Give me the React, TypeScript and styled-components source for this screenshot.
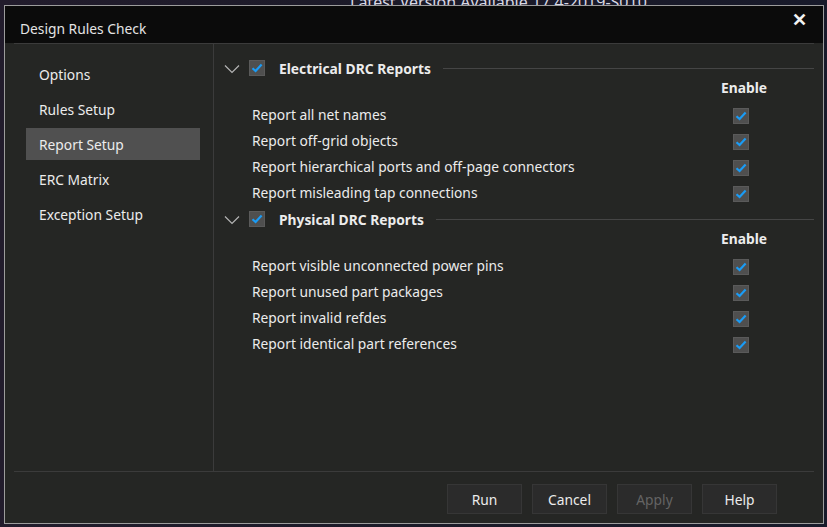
import React from "react";
import styled, { createGlobalStyle } from "styled-components";

const Global = createGlobalStyle`
  html, body { margin: 0; padding: 0; }
  body {
    width: 827px; height: 527px; overflow: hidden;
    background: #1c1a29;
    font-family: "Noto Sans", "Open Sans", sans-serif;
  }
`;

const Desktop = styled.div`
  position: relative;
  width: 827px;
  height: 527px;
  background: linear-gradient(90deg, #221c2c 0%, #1b1a28 50%, #181a2a 100%);
  overflow: hidden;
`;

const BackdropText = styled.div`
  padding: 0 0 0 350px;
  margin-top: -9px;
  font-size: 16px;
  color: #d8d8e4;
  white-space: nowrap;
`;

const Dialog = styled.div`
  position: absolute;
  left: 4px;
  top: 5px;
  width: 818px;
  height: 517px;
  border: 1px solid #9c9c9c;
  background: #252624;
  display: flex;
  flex-direction: column;
  color: #ececec;
`;

const TitleBar = styled.div`
  height: 37px;
  flex: none;
  background: #0b0b0b;
  display: flex;
  align-items: center;
  justify-content: space-between;
  padding: 0 16px 0 15px;
  box-sizing: border-box;
`;

const Title = styled.span`
  font-size: 13.8px;
  color: #e4e4e4;
  margin-top: 7px;
`;

const Close = styled.span`
  font-size: 18px;
  font-weight: 700;
  color: #f2f2f2;
  margin-top: -12px;
  line-height: 1;
`;

const Body = styled.div`
  flex: 1;
  display: flex;
  flex-direction: column;
  padding: 0 9px;
  min-height: 0;
`;

const Content = styled.div`
  flex: 1;
  display: flex;
  border-top: 1px solid #3b3b3b;
  border-bottom: 1px solid #3b3b3b;
  min-height: 0;
`;

const Sidebar = styled.div`
  width: 200px;
  flex: none;
  border-right: 1px solid #3b3b3b;
  padding: 14px 13px 0 12px;
  box-sizing: border-box;
  display: flex;
  flex-direction: column;
  gap: 3px;
`;

const NavItem = styled.div<{ $active?: boolean }>`
  height: 32px;
  display: flex;
  align-items: center;
  padding-left: 13px;
  font-size: 13.8px;
  color: #ececec;
  background: ${(p) => (p.$active ? "#505050" : "transparent")};
`;

const Main = styled.div`
  flex: 1;
  padding: 11px 0 0 10px;
  display: flex;
  flex-direction: column;
`;

const Section = styled.div`
  display: flex;
  flex-direction: column;
  & + & { margin-top: 1px; }
`;

const Header = styled.div`
  height: 26px;
  display: flex;
  align-items: center;
`;

const Chevron = styled.svg`
  width: 16px;
  height: 10px;
  margin-right: 9px;
  margin-top: 2px;
`;

const HeaderTitle = styled.span`
  font-size: 13.8px;
  font-weight: 700;
  margin-left: 14px;
  margin-right: 12px;
`;

const Rule = styled.div`
  flex: 1;
  height: 1px;
  background: #454545;
`;

const EnableRow = styled.div`
  height: 14px;
  margin-top: -1px;
  display: flex;
  justify-content: flex-end;
  align-items: center;
  padding-right: 47px;
`;

const EnableLabel = styled.span`
  font-size: 13.8px;
  font-weight: 700;
`;

const Rows = styled.div`
  margin-top: 7px;
  display: flex;
  flex-direction: column;
`;

const Row = styled.div`
  height: 26px;
  display: flex;
  align-items: center;
  padding-left: 28px;
`;

const RowLabel = styled.span`
  flex: 1;
  font-size: 13.8px;
`;

const CheckCell = styled.div`
  width: 81px;
  flex: none;
`;

const Box = styled.span`
  width: 16px;
  height: 16px;
  background: #4f4f4f;
  border: 1px solid #5a5a5a;
  box-sizing: border-box;
  display: inline-flex;
  align-items: center;
  justify-content: center;
  vertical-align: middle;
`;

const Footer = styled.div`
  height: 51px;
  flex: none;
  display: flex;
  justify-content: flex-end;
  align-items: flex-start;
  gap: 10px;
  padding: 12px 37px 0 0;
  box-sizing: border-box;
`;

const Button = styled.button<{ $disabled?: boolean }>`
  width: 75px;
  height: 30px;
  background: #2b2b2b;
  border: 1px solid #363636;
  color: ${(p) => (p.$disabled ? "#646464" : "#ececec")};
  font-family: inherit;
  font-size: 13.8px;
  padding: 0;
`;

const Check = () => (
  <Box>
    <svg width="12" height="10" viewBox="0 0 12 10">
      <path d="M1.5 5.2 L4.6 8 L10.6 1.6" fill="none" stroke="#1a9cf6" strokeWidth="2.2" />
    </svg>
  </Box>
);

const sections = [
  {
    title: "Electrical DRC Reports",
    rows: [
      "Report all net names",
      "Report off-grid objects",
      "Report hierarchical ports and off-page connectors",
      "Report misleading tap connections",
    ],
  },
  {
    title: "Physical DRC Reports",
    rows: [
      "Report visible unconnected power pins",
      "Report unused part packages",
      "Report invalid refdes",
      "Report identical part references",
    ],
  },
];

const nav = ["Options", "Rules Setup", "Report Setup", "ERC Matrix", "Exception Setup"];

export default function App() {
  return (
    <Desktop>
      <Global />
      <BackdropText>Latest Version Available 17.4-2019-S010</BackdropText>
      <Dialog>
        <TitleBar>
          <Title>Design Rules Check</Title>
          <Close>✕</Close>
        </TitleBar>
        <Body>
          <Content>
            <Sidebar>
              {nav.map((n) => (
                <NavItem key={n} $active={n === "Report Setup"}>
                  {n}
                </NavItem>
              ))}
            </Sidebar>
            <Main>
              {sections.map((s) => (
                <Section key={s.title}>
                  <Header>
                    <Chevron viewBox="0 0 16 10">
                      <path d="M1 1.5 L8 8.5 L15 1.5" fill="none" stroke="#b4b4b4" strokeWidth="1.2" />
                    </Chevron>
                    <Check />
                    <HeaderTitle>{s.title}</HeaderTitle>
                    <Rule />
                  </Header>
                  <EnableRow>
                    <EnableLabel>Enable</EnableLabel>
                  </EnableRow>
                  <Rows>
                    {s.rows.map((r) => (
                      <Row key={r}>
                        <RowLabel>{r}</RowLabel>
                        <CheckCell>
                          <Check />
                        </CheckCell>
                      </Row>
                    ))}
                  </Rows>
                </Section>
              ))}
            </Main>
          </Content>
          <Footer>
            <Button>Run</Button>
            <Button>Cancel</Button>
            <Button $disabled>Apply</Button>
            <Button>Help</Button>
          </Footer>
        </Body>
      </Dialog>
    </Desktop>
  );
}
